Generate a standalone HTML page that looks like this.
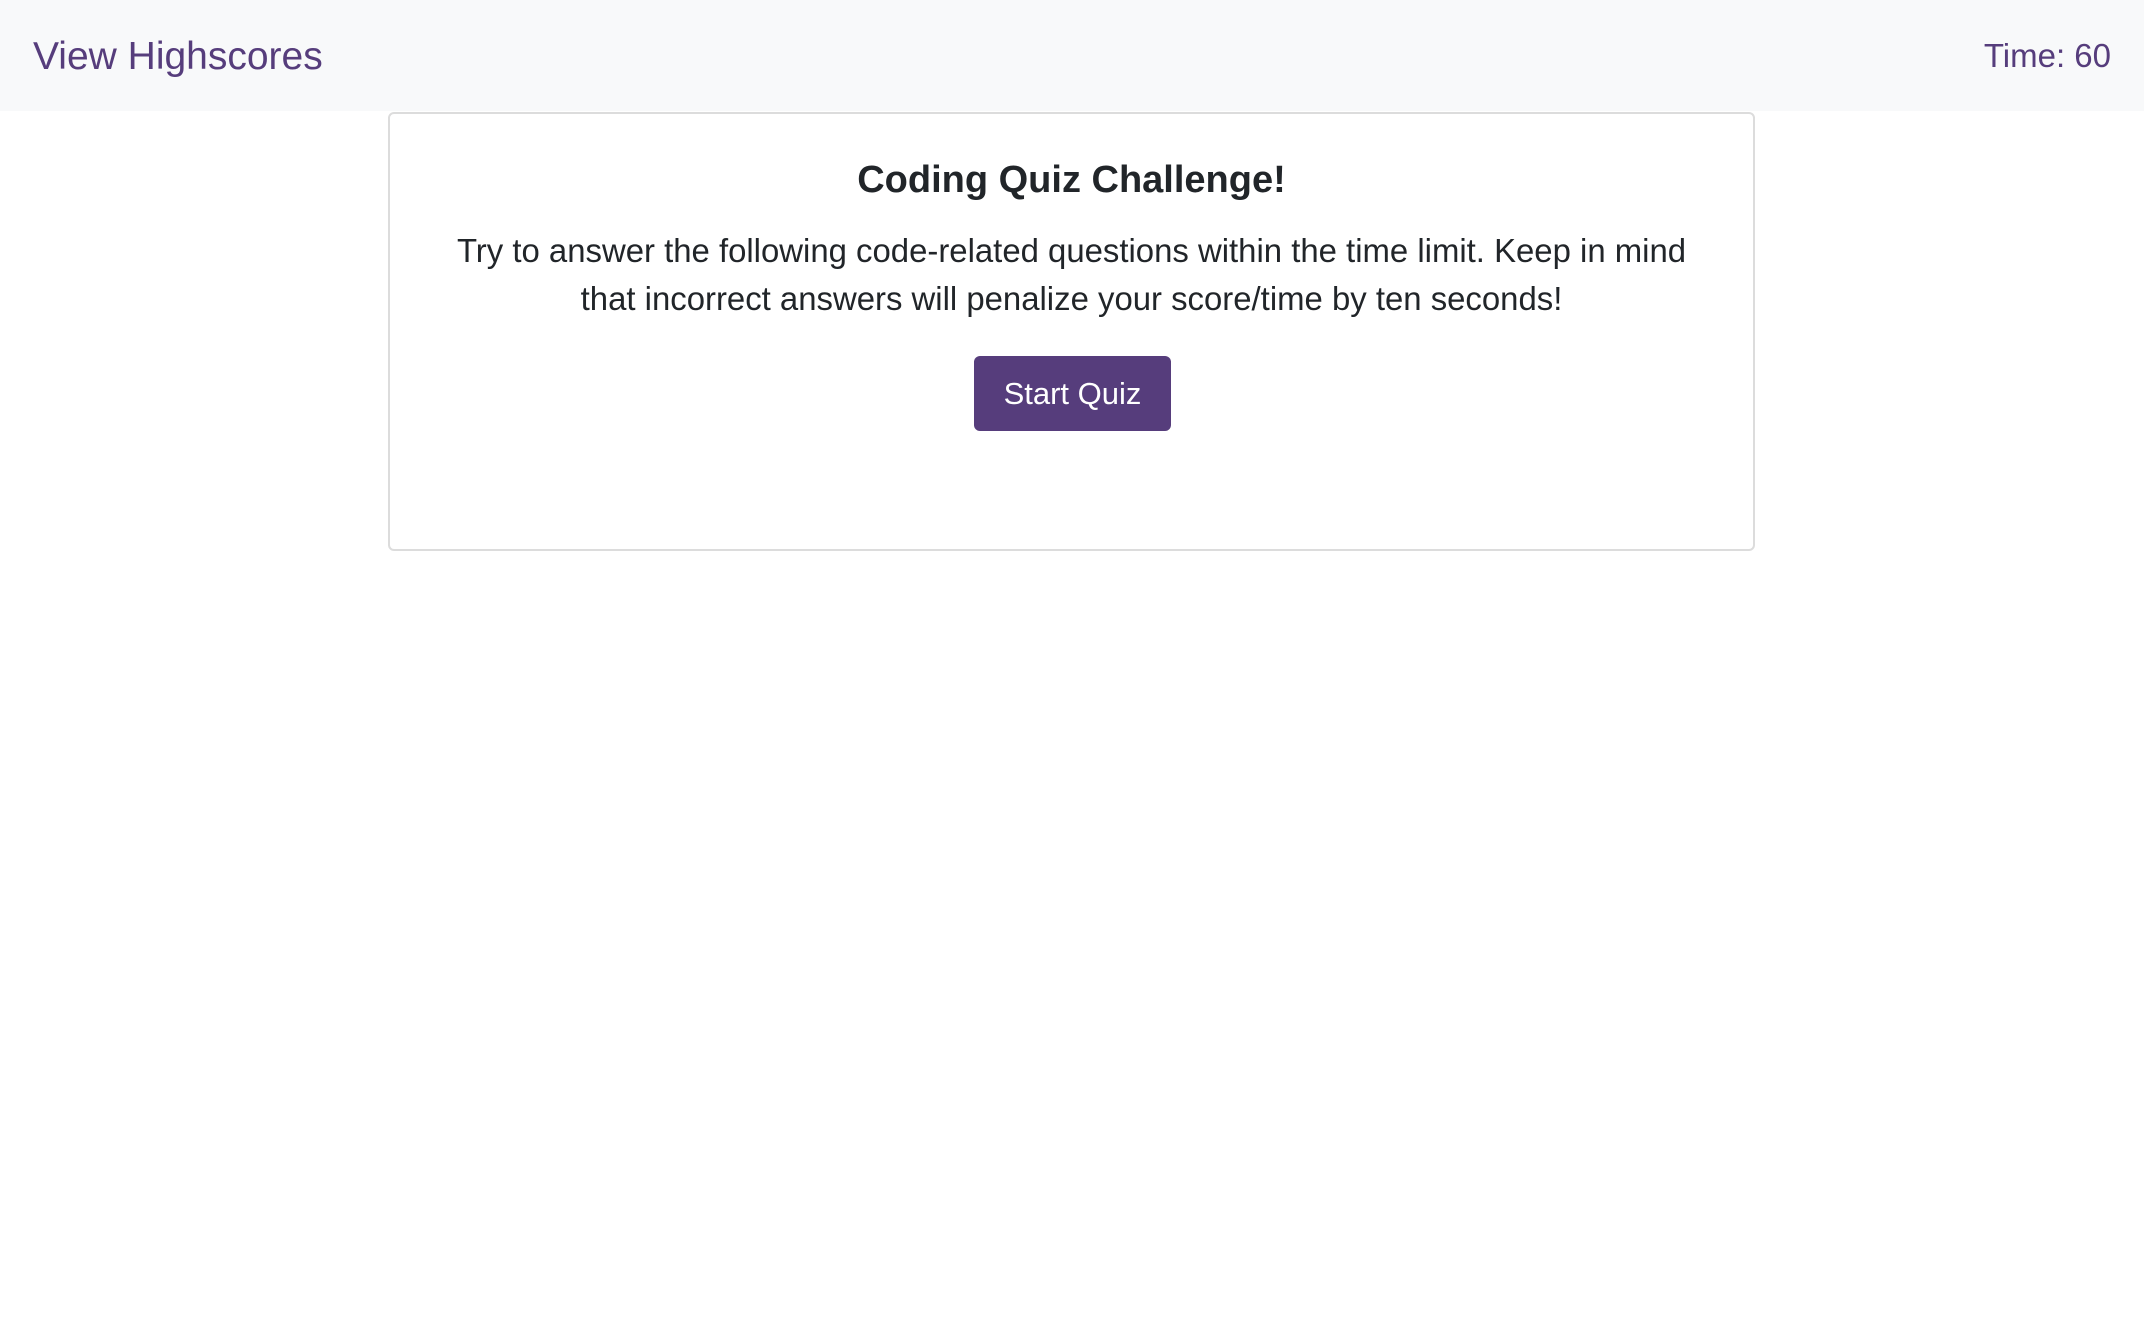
<!DOCTYPE html>
<html><head><style>
*{margin:0;padding:0;box-sizing:border-box}
body{width:2144px;height:1332px;background:#fff;font-family:"Liberation Sans",sans-serif;color:#212529;position:relative;overflow:hidden}
.nav{position:absolute;left:0;top:0;width:2144px;height:111px;background:#f8f9fa}
.brand{position:absolute;left:33px;top:35px;font-size:39px;color:#563d7c;line-height:44px}
.time{position:absolute;right:33px;top:37px;font-size:33px;color:#563d7c;line-height:38px}
.card{position:absolute;left:388px;top:112px;width:1367px;height:439px;border:2px solid #dcdcdc;border-radius:6px;text-align:center}
h1{position:absolute;left:0;right:0;top:44px;font-size:38px;font-weight:bold;line-height:44px}
p{position:absolute;left:40px;right:40px;top:113px;font-size:32.9px;line-height:48px}
.btn{position:absolute;left:584px;top:242px;width:197px;height:75px;background:#563d7c;border-radius:6px;color:#fff;font-size:31px;line-height:75px}
</style></head><body>
<div class="nav"><div class="brand">View Highscores</div><div class="time">Time: 60</div></div>
<div class="card">
<h1>Coding Quiz Challenge!</h1>
<p>Try to answer the following code-related questions within the time limit. Keep in mind<br>that incorrect answers will penalize your score/time by ten seconds!</p>
<div class="btn">Start Quiz</div>
</div>
</body></html>
